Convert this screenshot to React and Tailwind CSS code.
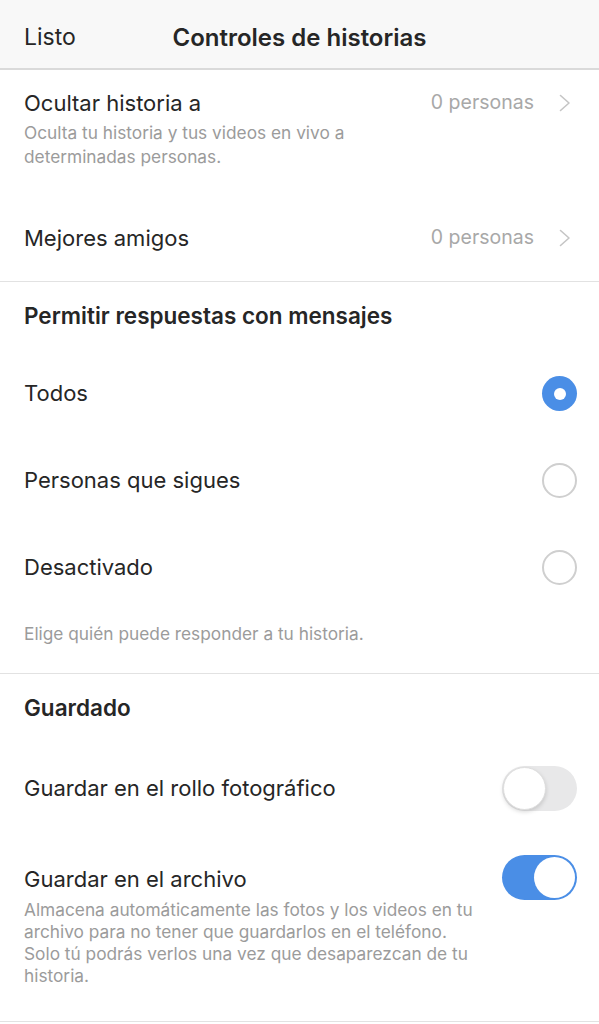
const Chevron = () => (
  <svg width="12" height="18" viewBox="0 0 12 18" fill="none">
    <polyline points="1.5,1.5 10,9 1.5,16.5" stroke="#c5c5c5" strokeWidth="1.6" strokeLinecap="round" strokeLinejoin="round" />
  </svg>
);

const Radio = ({ checked }) =>
  checked ? (
    <div className="w-[35px] h-[35px] rounded-full bg-[#4a8ee6] flex items-center justify-center">
      <div className="w-[12px] h-[12px] rounded-full bg-white" />
    </div>
  ) : (
    <div className="w-[35px] h-[35px] rounded-full border-2 border-[#cfcfcf]" />
  );

const Toggle = ({ on }) =>
  on ? (
    <div className="w-[75px] h-[45px] rounded-full bg-[#4a8ee6] flex items-center justify-end p-[2px]">
      <div className="w-[41px] h-[41px] rounded-full bg-white" />
    </div>
  ) : (
    <div className="w-[75px] h-[45px] rounded-full bg-[#e8e8e9] flex items-center p-[1px]">
      <div className="w-[43px] h-[43px] rounded-full bg-white border border-[#dedede] shadow-[0_2px_4px_rgba(0,0,0,0.15)]" />
    </div>
  );

export default function App() {
  const replies = [
    { label: "Todos", checked: true },
    { label: "Personas que sigues", checked: false },
    { label: "Desactivado", checked: false },
  ];

  return (
    <div
      className="w-[599px] h-[1024px] bg-white text-[#262626] overflow-hidden"
      style={{ fontFamily: "Inter, 'Noto Sans', sans-serif" }}
    >
      {/* header */}
      <div className="h-[70px] pt-[7px] bg-[#f8f8f8] border-b-2 border-[#dadada] grid grid-cols-[1fr_auto_1fr] items-center px-6">
        <div className="text-[23px]">Listo</div>
        <div className="text-[24px] font-semibold">Controles de historias</div>
        <div />
      </div>

      {/* privacy */}
      <div className="pt-[19px] pb-[29px] border-b border-[#e2e2e2] pl-6 pr-[28px]">
        <div className="flex items-center justify-between h-[28px]">
          <div className="text-[22px]">Ocultar historia a</div>
          <div className="flex items-center gap-[25px] text-[#a8a8a8] text-[19.5px]">
            <span>0 personas</span>
            <Chevron />
          </div>
        </div>
        <div className="mt-[4px] text-[17.3px] leading-[24px] text-[#9b9b9b]">
          Oculta tu historia y tus videos en vivo a
          <br />
          determinadas personas.
        </div>
        <div className="mt-[55px] flex items-center justify-between h-[28px]">
          <div className="text-[22px]">Mejores amigos</div>
          <div className="flex items-center gap-[25px] text-[#a8a8a8] text-[19.5px]">
            <span>0 personas</span>
            <Chevron />
          </div>
        </div>
      </div>

      {/* replies */}
      <div className="pt-[20px] pb-[27px] border-b border-[#e2e2e2] pl-6 pr-[22px]">
        <div className="h-[28px] flex items-center text-[22.5px] font-semibold">
          Permitir respuestas con mensajes
        </div>
        <div className="mt-[20px]">
          {replies.map((r) => (
            <div key={r.label} className="h-[87px] flex items-center justify-between">
              <div className="text-[22px]">{r.label}</div>
              <Radio checked={r.checked} />
            </div>
          ))}
        </div>
        <div className="mt-[11px] text-[17.3px] leading-[24px] text-[#9b9b9b]">
          Elige quién puede responder a tu historia.
        </div>
      </div>

      {/* saving */}
      <div className="pt-[20px] pb-[34px] border-b border-[#e2e2e2] pl-6 pr-[22px]">
        <div className="h-[28px] flex items-center text-[22.5px] font-semibold">Guardado</div>
        <div className="mt-[22px] h-[88px] flex items-center justify-between">
          <div className="text-[22px]">Guardar en el rollo fotográfico</div>
          <Toggle on={false} />
        </div>
        <div className="mt-[33px] flex items-start justify-between">
          <div>
            <div className="h-[28px] flex items-center text-[22px]">Guardar en el archivo</div>
            <div className="mt-[6px] text-[17.3px] leading-[22px] text-[#9b9b9b]">
              Almacena automáticamente las fotos y los videos en tu
              <br />
              archivo para no tener que guardarlos en el teléfono.
              <br />
              Solo tú podrás verlos una vez que desaparezcan de tu
              <br />
              historia.
            </div>
          </div>
          <div className="-mt-[10px]">
            <Toggle on={true} />
          </div>
        </div>
      </div>
    </div>
  );
}
